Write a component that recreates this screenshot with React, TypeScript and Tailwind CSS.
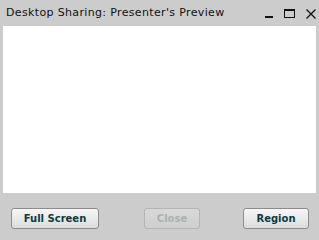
import React from 'react';

const BTN_BASE =
  'h-[21px] rounded-[3px] border text-[10px] font-bold flex items-center justify-center leading-none';

export default function App() {
  return (
    <div
      className="w-[319px] h-[240px] bg-[#cccccc] flex flex-col overflow-hidden"
      style={{ fontFamily: '"DejaVu Sans", Verdana, sans-serif' }}
    >
      {/* Title bar */}
      <div className="h-[26px] flex items-center pl-[6px] pr-[3px] pt-[1px]">
        <span className="text-[11px] text-[#111111] tracking-[0.35px]">
          Desktop Sharing: Presenter&apos;s Preview
        </span>
        <div className="ml-auto flex items-center gap-[11px] text-[#111111]">
          <svg width="8" height="10" viewBox="0 0 8 10">
            <rect x="0" y="7" width="8" height="2" fill="currentColor" />
          </svg>
          <svg width="11" height="10" viewBox="0 0 11 10">
            <rect x="0.5" y="0.5" width="10" height="8" fill="none" stroke="currentColor" />
            <rect x="0" y="0" width="11" height="2" fill="currentColor" />
          </svg>
          <svg width="10" height="10" viewBox="0 0 10 10">
            <path d="M0.5 0.5L9.5 9.5M9.5 0.5L0.5 9.5" stroke="currentColor" strokeWidth="1.3" />
          </svg>
        </div>
      </div>

      {/* Preview area */}
      <div className="mx-[3px] h-[167px] bg-white" />

      {/* Buttons */}
      <div className="flex items-start pt-[15px] pl-[11px] pr-[10px]">
        <button
          className={`${BTN_BASE} w-[88px] border-[#8c8c8c] text-[#0e3a44] bg-gradient-to-b from-[#f7f7f7] to-[#dcdcdc]`}
        >
          Full Screen
        </button>
        <button
          className={`${BTN_BASE} ml-[45px] w-[56px] border-[#b4b4b4] text-[#a9b2b2] bg-gradient-to-b from-[#d8d8d8] to-[#cfcfcf]`}
        >
          Close
        </button>
        <button
          className={`${BTN_BASE} ml-auto w-[66px] border-[#8c8c8c] text-[#0e3a44] bg-gradient-to-b from-[#f7f7f7] to-[#dcdcdc]`}
        >
          Region
        </button>
      </div>
    </div>
  );
}
